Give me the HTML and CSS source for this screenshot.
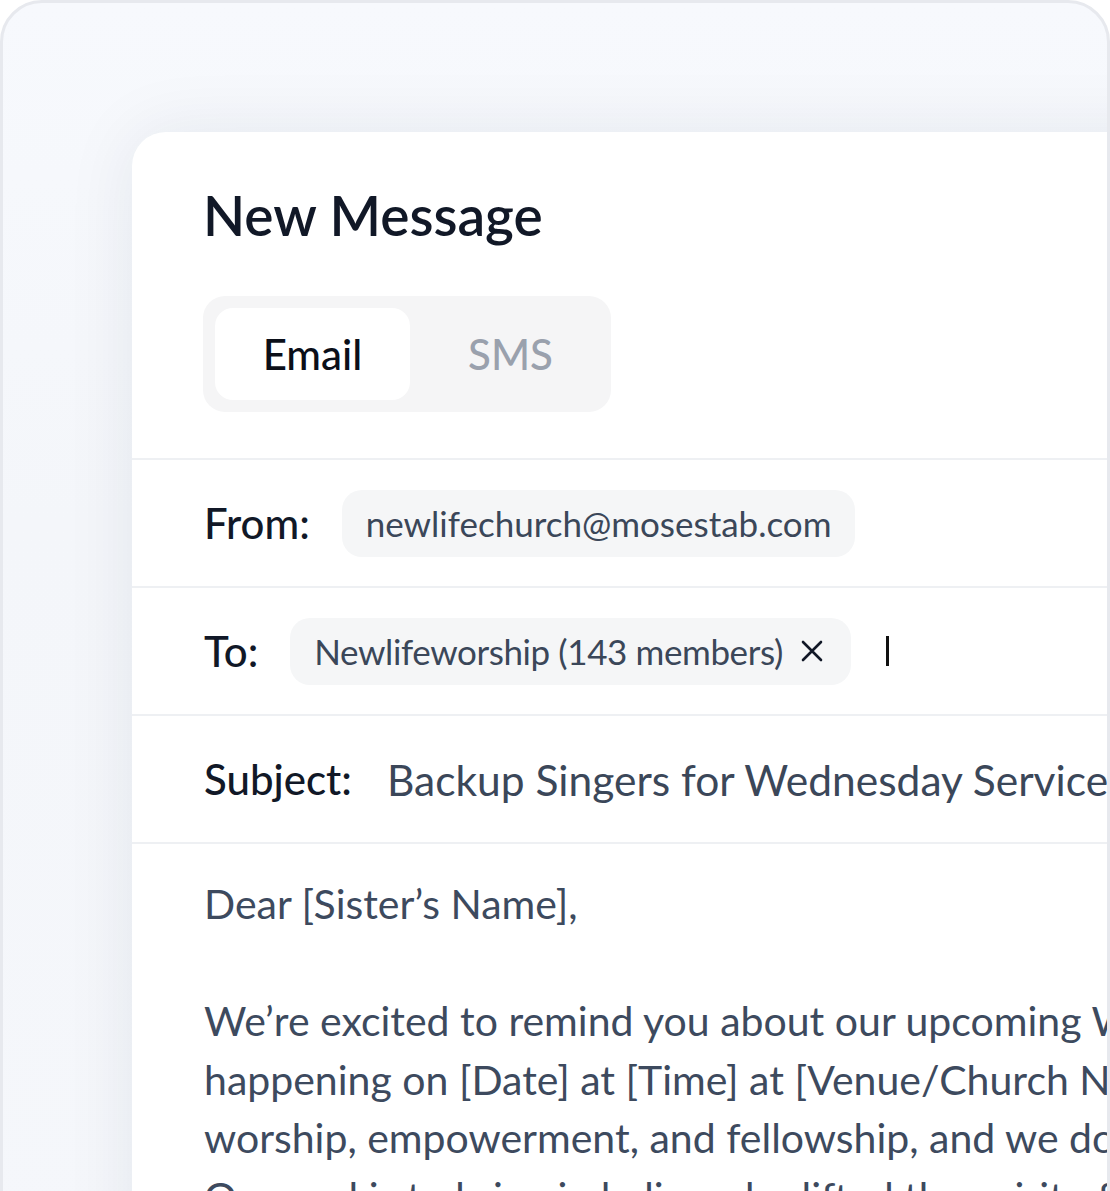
FILE: index.html
```html
<!DOCTYPE html>
<html lang="en">
<head>
<meta charset="utf-8">
<title>New Message</title>
<link rel="stylesheet" href="styles.css">
</head>
<body>
<div class="frame">
  <section class="card">
    <header class="card-head">
      <h1 class="title">New Message</h1>
      <div class="tabs">
        <div class="tab tab-active">Email</div>
        <div class="tab">SMS</div>
      </div>
    </header>
    <div class="row">
      <span class="label">From:</span>
      <span class="pill">newlifechurch@mosestab.com</span>
    </div>
    <div class="row">
      <span class="label">To:</span>
      <span class="pill pill-chip">Newlifeworship (143 members)
        <svg class="close" width="22" height="22" viewBox="0 0 22 22" aria-hidden="true"><path d="M2 2 L20 20 M20 2 L2 20" stroke="#111827" stroke-width="2.6" stroke-linecap="round" fill="none"/></svg>
      </span>
      <span class="caret"></span>
    </div>
    <div class="row">
      <span class="label">Subject:</span>
      <span class="subject">Backup Singers for Wednesday Service</span>
    </div>
    <div class="body">
      <p class="line">Dear [Sister’s Name],</p>
      <p class="line">&nbsp;</p>
      <p class="line">We’re excited to remind you about our upcoming Wednesday Service,</p>
      <p class="line">happening on [Date] at [Time] at [Venue/Church Name]. It’s a night of</p>
      <p class="line">worship, empowerment, and fellowship, and we don’t want you to miss it.</p>
      <p class="line">Our goal is to bring in ladies who lifted the spirit of fire and praise.</p>
    </div>
  </section>
</div>
</body>
</html>
```
FILE: styles.css
```css
html, body {
  margin: 0;
  padding: 0;
  overflow: hidden;
  background: #ffffff;
}

body {
  font-family: "Lato", "Liberation Sans", sans-serif;
  color: #111827;
}

.frame {
  box-sizing: border-box;
  width: 1110px;
  height: 1300px;
  border: 3px solid #e7e9ee;
  border-radius: 42px;
  background: linear-gradient(180deg, #f7f9fd 0%, #f4f6fa 40%, #f5f7fb 100%);
  overflow: hidden;
  display: flex;
  align-items: flex-start;
  padding: 129px 0 0 129px;
}

.card {
  flex: 0 0 auto;
  width: 1200px;
  min-height: 1200px;
  background: #ffffff;
  border-radius: 34px 0 0 0;
  box-shadow: 0 0 70px rgba(30, 41, 59, 0.08);
}

.card-head {
  padding: 51px 72px 46px 71px;
  display: flex;
  flex-direction: column;
  align-items: flex-start;
  gap: 49px;
}

.title {
  margin: 0;
  font-size: 55px;
  line-height: 64px;
  font-weight: 600;
  letter-spacing: 0;
  color: #111827;
}

.tabs {
  display: flex;
  gap: 3px;
  padding: 12px 3px 12px 12px;
  background: #f5f5f6;
  border-radius: 22px;
}

.tab {
  width: 195px;
  height: 92px;
  display: flex;
  align-items: center;
  justify-content: center;
  font-size: 42px;
  font-weight: 500;
  color: #9aa1ad;
  border-radius: 18px;
}

.tab-active {
  background: #ffffff;
  color: #0b0f19;
}

.row {
  height: 126px;
  border-top: 2px solid #eef0f3;
  display: flex;
  align-items: center;
  padding-left: 72px;
  gap: 32px;
}

.label {
  font-size: 42px;
  font-weight: 500;
  color: #111827;
}

.pill {
  height: 67px;
  box-sizing: border-box;
  display: inline-flex;
  align-items: center;
  padding: 0 24px;
  background: #f5f6f7;
  border-radius: 20px;
  font-size: 35px;
  font-weight: 400;
  color: #3b4759;
}

.pill-chip {
  gap: 18px;
  padding-right: 28px;
  letter-spacing: -0.4px;
}

.close {
  display: block;
}

.caret {
  width: 3px;
  height: 30px;
  background: #111111;
  margin-left: 3px;
}

.subject {
  margin-left: 3px;
  font-size: 42.5px;
  font-weight: 400;
  color: #3b4759;
}

.body {
  border-top: 2px solid #eef0f3;
  padding: 31px 0 0 72px;
}

.line {
  margin: 0;
  white-space: nowrap;
  font-size: 41px;
  line-height: 58.5px;
  font-weight: 400;
  color: #3d4a5e;
}
```
